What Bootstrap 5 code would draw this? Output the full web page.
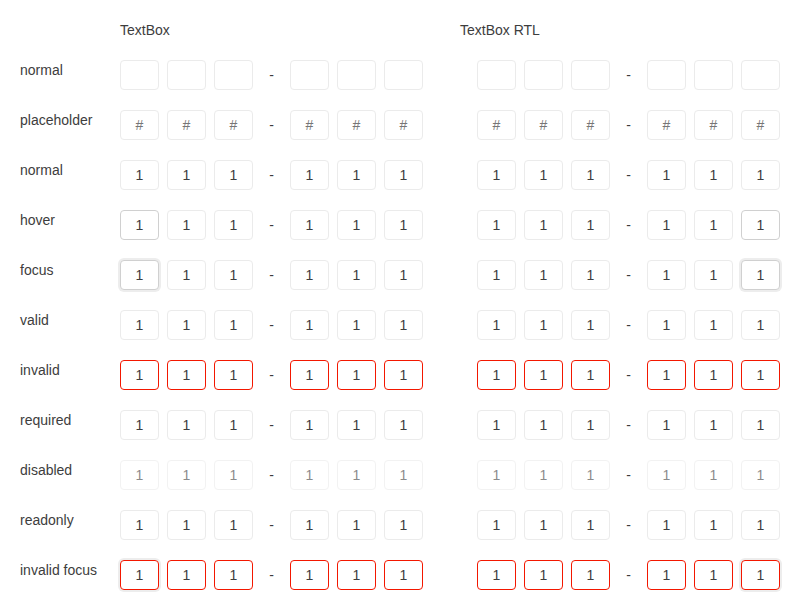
<!DOCTYPE html>
<html lang="en">
<head>
<meta charset="utf-8">
<meta name="viewport" content="width=device-width, initial-scale=1">
<title>OTP input states</title>
<link href="https://cdn.jsdelivr.net/npm/bootstrap@5.3.0/dist/css/bootstrap.min.css" rel="stylesheet">
<style>
  body {
    font-family: "Liberation Sans", Arial, sans-serif;
    font-size: 14px;
    line-height: 20px;
    color: #3d3d3d;
    background: #fff;
  }
  .state-grid {
    display: grid;
    grid-template-columns: 80px 1fr 1fr;
    gap: 20px;
    padding: 20px;
  }
  .otp-group { gap: 8px; }
  .otp-separator { width: 21px; text-align: center; }
  .otp-box.form-control {
    width: 39px;
    height: 30px;
    min-height: 0;
    padding: 4px;
    font-size: 14px;
    line-height: 20px;
    text-align: center;
    color: #3d3d3d;
    background: #fff;
    border: 1px solid #ebebeb;
    border-radius: 4px;
    transition: none;
  }
  .otp-box.form-control::placeholder { color: #767676; opacity: 1; }
  .otp-box.form-control:hover,
  .otp-box.state-hover { border-color: #d0d0d0; }
  .otp-box.form-control:focus,
  .otp-box.state-focus { border-color: #d0d0d0; box-shadow: 0 0 0 2px #ededed; }
  .otp-box.state-invalid { border-color: #f31700; }
  .otp-box.state-invalid.state-focus { box-shadow: 0 0 0 2px #ededed; }
  .otp-box.form-control:disabled { opacity: .6; }
</style>
</head>
<body>
<main class="state-grid" id="states">
  <span></span>
  <span>TextBox</span>
  <span>TextBox RTL</span>
</main>
<script src="https://cdn.jsdelivr.net/npm/bootstrap@5.3.0/dist/js/bootstrap.bundle.min.js"></script>
<script>
  // all: classes for every box; first: class for the leading box; attrs: input attributes
  const states = [
    { name: 'normal', value: '' },
    { name: 'placeholder', value: '', attrs: 'placeholder="#"' },
    { name: 'normal' },
    { name: 'hover', first: 'state-hover' },
    { name: 'focus', first: 'state-focus' },
    { name: 'valid' },
    { name: 'invalid', all: 'state-invalid', attrs: 'aria-invalid="true"' },
    { name: 'required', attrs: 'required' },
    { name: 'disabled', attrs: 'disabled' },
    { name: 'readonly', attrs: 'readonly' },
    { name: 'invalid focus', all: 'state-invalid', first: 'state-focus', attrs: 'aria-invalid="true"' }
  ];

  function group(state, row, dir) {
    let html = `<div class="otp-group d-flex align-items-center" role="group" dir="${dir}" aria-labelledby="state-${row}">`;
    for (let i = 0; i < 6; i++) {
      if (i === 3) html += '<span class="otp-separator">-</span>';
      const classes = ['form-control', 'otp-box', state.all || '', i === 0 ? state.first || '' : ''].join(' ').trim();
      html += `<input type="text" class="${classes}" maxlength="1" autocomplete="off" aria-label="${state.name}, character ${i + 1}" id="${dir}-${row}-${i}" value="${state.value ?? '1'}" ${state.attrs || ''}>`;
    }
    return html + '</div>';
  }

  document.getElementById('states').insertAdjacentHTML('beforeend', states.map((state, row) =>
    `<label class="text-nowrap" id="state-${row}" for="ltr-${row}-0">${state.name}</label>` +
    group(state, row, 'ltr') + group(state, row, 'rtl')
  ).join(''));
</script>
</body>
</html>
